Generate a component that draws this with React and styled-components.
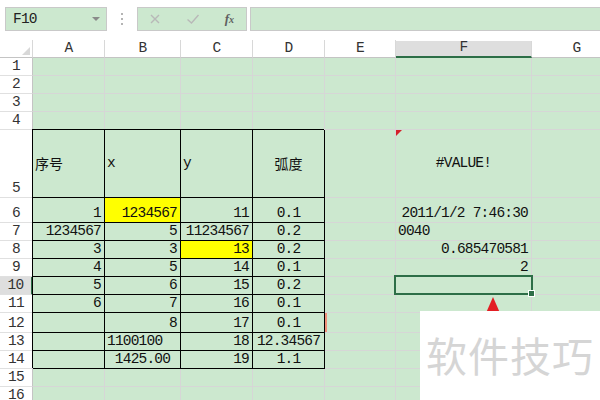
import React from "react";
import styled, { createGlobalStyle, css } from "styled-components";

const GREEN = "#cce8cf";
const GRID = "#d6d6d6";
const SELECT = "#2d6e47";
const MONO = `"Liberation Mono", "Noto Sans CJK SC", monospace`;
const CJK = `"Noto Sans CJK SC", "Liberation Sans", sans-serif`;

const COLS = [
  { key: "A", w: 72 },
  { key: "B", w: 76 },
  { key: "C", w: 72 },
  { key: "D", w: 72 },
  { key: "E", w: 71 },
  { key: "F", w: 136 },
  { key: "G", w: 90 },
];

const BOXED = ["A", "B", "C", "D"];
const YELLOW = "#ffff00";

const ROWS = [
  { n: 1, h: 18 },
  { n: 2, h: 18 },
  { n: 3, h: 18 },
  { n: 4, h: 18 },
  {
    n: 5,
    h: 68,
    mid: true,
    cells: {
      A: { t: "序号", align: "left", cjk: true },
      B: { t: "x", align: "left" },
      C: { t: "y", align: "left" },
      D: { t: "弧度", align: "center", cjk: true },
      F: { t: "#VALUE!", align: "center", comment: true },
    },
  },
  {
    n: 6,
    h: 25,
    cells: {
      A: { t: "1" },
      B: { t: "1234567", fill: YELLOW },
      C: { t: "11" },
      D: { t: "0.1", align: "center" },
      F: { t: "2011/1/2 7:46:30" },
    },
  },
  {
    n: 7,
    h: 18,
    cells: {
      A: { t: "1234567" },
      B: { t: "5" },
      C: { t: "11234567" },
      D: { t: "0.2", align: "center" },
      F: { t: "0040", align: "left" },
    },
  },
  {
    n: 8,
    h: 18,
    cells: {
      A: { t: "3" },
      B: { t: "3" },
      C: { t: "13", fill: YELLOW },
      D: { t: "0.2", align: "center" },
      F: { t: "0.685470581" },
    },
  },
  {
    n: 9,
    h: 18,
    cells: {
      A: { t: "4" },
      B: { t: "5" },
      C: { t: "14" },
      D: { t: "0.1", align: "center" },
      F: { t: "2" },
    },
  },
  {
    n: 10,
    h: 18,
    active: true,
    cells: {
      A: { t: "5" },
      B: { t: "6" },
      C: { t: "15" },
      D: { t: "0.2", align: "center" },
      F: { selected: true },
    },
  },
  {
    n: 11,
    h: 18,
    cells: {
      A: { t: "6" },
      B: { t: "7" },
      C: { t: "16" },
      D: { t: "0.1", align: "center" },
    },
  },
  {
    n: 12,
    h: 20,
    cells: {
      B: { t: "8" },
      C: { t: "17" },
      D: { t: "0.1", align: "center" },
      E: { mark: true },
    },
  },
  {
    n: 13,
    h: 18,
    cells: {
      B: { t: "1100100", align: "left" },
      C: { t: "18" },
      D: { t: "12.34567", align: "center" },
    },
  },
  {
    n: 14,
    h: 18,
    cells: {
      B: { t: "1425.00", align: "center" },
      C: { t: "19" },
      D: { t: "1.1", align: "center" },
    },
  },
  { n: 15, h: 18 },
  { n: 16, h: 18 },
];

const GlobalStyle = createGlobalStyle`
  html, body {
    margin: 0;
    padding: 0;
    background: #fff;
    overflow: hidden;
  }
`;

const Page = styled.div`
  position: relative;
  width: 600px;
  height: 400px;
  overflow: hidden;
  background: #fff;
  font-family: ${MONO};
  color: #111;
`;

const Toolbar = styled.div`
  height: 40px;
  box-sizing: border-box;
  padding: 7px 0 0 5px;
  display: flex;
  align-items: flex-start;
`;

const Field = styled.div`
  flex: none;
  box-sizing: border-box;
  height: 24px;
  width: ${(p) => p.$w}px;
  background: ${GREEN};
  border: 1px solid #c9c9c9;
  display: flex;
  align-items: center;
`;

const NameBox = styled(Field)`
  justify-content: space-between;
  padding: 0 6px 0 7px;
  font-size: 14.5px;
  letter-spacing: -0.8px;
  color: #222;
`;

const DropArrow = styled.span`
  width: 0;
  height: 0;
  border-left: 4px solid transparent;
  border-right: 4px solid transparent;
  border-top: 4px solid #8a8a8a;
`;

const Dots = styled.div`
  width: 30px;
  flex: none;
  height: 24px;
  display: flex;
  flex-direction: column;
  align-items: center;
  justify-content: center;
  gap: 3px;
  span {
    width: 2px;
    height: 2px;
    background: #b4b4b4;
  }
`;

const IconBox = styled(Field)`
  justify-content: space-between;
  padding: 0 12px 0 10px;
`;

const Fx = styled.span`
  font-family: "Liberation Serif", serif;
  font-style: italic;
  font-weight: bold;
  font-size: 13px;
  color: #606060;
  sub {
    font-size: 10px;
    vertical-align: baseline;
  }
`;

const Formula = styled(Field)`
  margin-left: 3px;
  border-right: none;
`;

const Row = styled.div`
  display: flex;
  height: ${(p) => p.$h}px;
  font-size: 14.5px;
  letter-spacing: -0.8px;
`;

const Corner = styled.div`
  position: relative;
  width: 33px;
  flex: none;
  box-sizing: border-box;
  border-right: 1px solid #d8d8d8;
  border-bottom: 1px solid #c4c4c4;
  &::after {
    content: "";
    position: absolute;
    right: 2px;
    bottom: 2px;
    width: 0;
    height: 0;
    border-left: 8px solid transparent;
    border-bottom: 8px solid #d8d8d8;
  }
`;

const ColHead = styled.div`
  width: ${(p) => p.$w}px;
  flex: none;
  box-sizing: border-box;
  display: flex;
  align-items: flex-end;
  justify-content: center;
  padding-bottom: 1px;
  line-height: 15px;
  color: #333;
  background: ${(p) => (p.$active ? "#dedede" : "#fff")};
  border-right: 1px solid #d8d8d8;
  border-bottom: ${(p) => (p.$active ? `2px solid ${SELECT}` : "1px solid #c4c4c4")};
  margin-top: ${(p) => (p.$active ? 1 : 0)}px;
`;

const RowHead = styled.div`
  width: 33px;
  flex: none;
  box-sizing: border-box;
  display: flex;
  align-items: flex-end;
  justify-content: center;
  padding-bottom: 1px;
  line-height: 15px;
  color: #333;
  background: ${(p) => (p.$active ? "#dedede" : "#fff")};
  border-right: ${(p) => (p.$active ? `2px solid ${SELECT}` : "1px solid #c4c4c4")};
  border-bottom: 1px solid #e0e0e0;
`;

const Cell = styled.div`
  position: relative;
  flex: none;
  box-sizing: border-box;
  width: ${(p) => p.$w}px;
  display: flex;
  align-items: ${(p) => (p.$mid ? "center" : "flex-end")};
  justify-content: ${(p) =>
    p.$align === "left" ? "flex-start" : p.$align === "center" ? "center" : "flex-end"};
  padding: 0 ${(p) => (p.$align === "left" ? 2 : 3)}px ${(p) => (p.$mid ? 0 : 1)}px;
  background: ${(p) => p.$fill || GREEN};
  border-right: 1px solid ${GRID};
  border-bottom: 1px solid ${GRID};
  font-family: ${(p) => (p.$cjk ? CJK : MONO)};
  ${(p) =>
    p.$cjk &&
    css`
      font-size: 14px;
      letter-spacing: 0;
    `}
  line-height: 15px;
  white-space: nowrap;
  ${(p) =>
    p.$boxed &&
    css`
      border-right-color: #000;
      border-bottom-color: #000;
      box-shadow: -1px -1px 0 #000;
    `}
  ${(p) =>
    p.$comment &&
    css`
      &::before {
        content: "";
        position: absolute;
        left: 0;
        top: 0;
        border-top: 6px solid #d4202a;
        border-right: 6px solid transparent;
      }
    `}
  ${(p) =>
    p.$mark &&
    css`
      &::before {
        content: "";
        position: absolute;
        left: 0;
        top: 0;
        bottom: 0;
        width: 2px;
        background: #f0907a;
      }
    `}
  ${(p) =>
    p.$selected &&
    css`
      &::after {
        content: "";
        position: absolute;
        left: -2px;
        top: -2px;
        right: -2px;
        bottom: -1px;
        border: 2px solid ${SELECT};
        z-index: 2;
      }
    `}
`;

const Handle = styled.span`
  position: absolute;
  right: -4px;
  bottom: -3px;
  width: 5px;
  height: 5px;
  background: ${SELECT};
  border: 1px solid #fff;
  z-index: 3;
`;

const Arrow = styled.svg`
  position: absolute;
  left: 486px;
  top: 297px;
  z-index: 4;
`;

const Watermark = styled.div`
  position: absolute;
  left: 420px;
  top: 311px;
  width: 180px;
  height: 89px;
  background: #fff;
  z-index: 5;
  box-sizing: border-box;
  padding: 18px 0 0 6px;
  font-family: ${CJK};
  font-size: 41px;
  line-height: 50px;
  letter-spacing: 1px;
  color: #d5d5d5;
  white-space: nowrap;
`;

function SheetRow({ row }) {
  const cells = row.cells || {};
  const boxed = row.n >= 5 && row.n <= 14;
  return (
    <Row $h={row.h}>
      <RowHead $active={row.active}>{row.n}</RowHead>
      {COLS.map((c) => {
        const d = cells[c.key] || {};
        return (
          <Cell
            key={c.key}
            $w={c.w}
            $mid={row.mid}
            $align={d.align}
            $fill={d.fill}
            $cjk={d.cjk}
            $boxed={boxed && BOXED.includes(c.key)}
            $comment={d.comment}
            $mark={d.mark}
            $selected={d.selected}
          >
            {d.t}
            {d.selected && <Handle />}
          </Cell>
        );
      })}
    </Row>
  );
}

export default function App() {
  return (
    <Page>
      <GlobalStyle />
      <Toolbar>
        <NameBox $w={102}>
          <span>F10</span>
          <DropArrow />
        </NameBox>
        <Dots>
          <span />
          <span />
          <span />
        </Dots>
        <IconBox $w={110}>
          <svg width="14" height="14" viewBox="0 0 14 14">
            <path d="M3 3 L11 11 M11 3 L3 11" stroke="#b8b8b8" strokeWidth="1.4" fill="none" />
          </svg>
          <svg width="14" height="14" viewBox="0 0 14 14">
            <path d="M1.5 7.5 L5.5 11 L12.5 3" stroke="#b8b8b8" strokeWidth="1.4" fill="none" />
          </svg>
          <Fx>
            f<sub>x</sub>
          </Fx>
        </IconBox>
        <Formula $w={360} />
      </Toolbar>
      <Row $h={18}>
        <Corner />
        {COLS.map((c) => (
          <ColHead key={c.key} $w={c.w} $active={c.key === "F"}>
            {c.key}
          </ColHead>
        ))}
      </Row>
      {ROWS.map((r) => (
        <SheetRow key={r.n} row={r} />
      ))}
      <Arrow width="14" height="16" viewBox="0 0 14 16">
        <polygon points="7,0 14,16 0,16" fill="#e31e24" />
      </Arrow>
      <Watermark>软件技巧</Watermark>
    </Page>
  );
}
